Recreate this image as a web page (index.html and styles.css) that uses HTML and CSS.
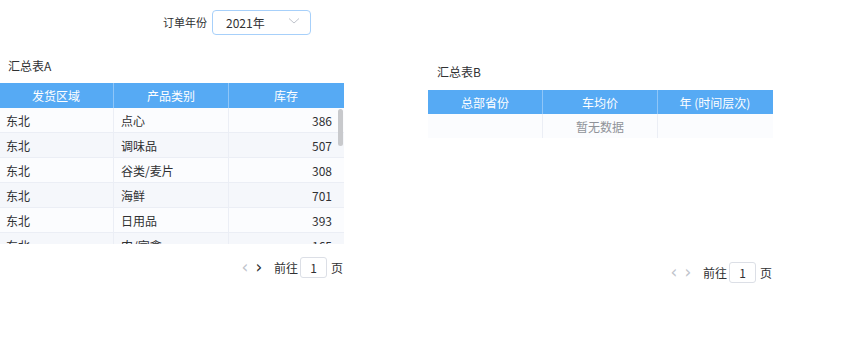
FILE: index.html
```html
<!DOCTYPE html>
<html lang="zh">
<head>
<meta charset="utf-8">
<link rel="stylesheet" href="styles.css">
</head>
<body>
<div class="canvas">
  <div class="widget filter">
    <span class="filter-label">订单年份</span>
    <div class="select">
      <span class="select-value">2021年</span>
      <svg class="chevron" width="12" height="8" viewBox="0 0 12 8"><path d="M1 1.5 L6 6 L11 1.5" fill="none" stroke="#c0c4cc" stroke-width="1"/></svg>
    </div>
  </div>

  <div class="widget title title-a">汇总表A</div>
  <div class="widget table table-a">
    <div class="thead">
      <div class="th">发货区域</div><div class="th">产品类别</div><div class="th">库存</div>
    </div>
    <div class="tbody">
      <div class="tr"><div class="td">东北</div><div class="td">点心</div><div class="td num">386</div></div>
      <div class="tr alt"><div class="td">东北</div><div class="td">调味品</div><div class="td num">507</div></div>
      <div class="tr"><div class="td">东北</div><div class="td">谷类/麦片</div><div class="td num">308</div></div>
      <div class="tr alt"><div class="td">东北</div><div class="td">海鲜</div><div class="td num">701</div></div>
      <div class="tr"><div class="td">东北</div><div class="td">日用品</div><div class="td num">393</div></div>
      <div class="tr alt"><div class="td">东北</div><div class="td">肉/家禽</div><div class="td num">165</div></div>
      <div class="thumb"></div>
    </div>
  </div>
  <div class="widget pager pager-a">
    <span class="arrow off">&lsaquo;</span><span class="arrow on">&rsaquo;</span>
    <span class="goto goto-first">前往</span><span class="page-input">1</span><span class="goto goto-last">页</span>
  </div>

  <div class="widget title title-b">汇总表B</div>
  <div class="widget table table-b">
    <div class="thead thead-b">
      <div class="th">总部省份</div><div class="th">车均价</div><div class="th">年 (时间层次)</div>
    </div>
    <div class="tr empty"><div class="td"></div><div class="td empty-text">暂无数据</div><div class="td"></div></div>
  </div>
  <div class="widget pager pager-b">
    <span class="arrow off">&lsaquo;</span><span class="arrow off">&rsaquo;</span>
    <span class="goto goto-first">前往</span><span class="page-input">1</span><span class="goto goto-last">页</span>
  </div>
</div>
</body>
</html>
```

FILE: styles.css
```css
* { box-sizing: border-box; }
html, body { margin: 0; padding: 0; background: #fff; }
body {
  font-family: "Noto Sans CJK SC", "Noto Sans", sans-serif;
  font-size: 12px;
  color: #303133;
}
.canvas { position: relative; width: 855px; height: 356px; overflow: hidden; }
.widget { position: absolute; }

.filter { left: 163px; top: 10px; display: flex; align-items: center; gap: 5px; height: 24px; }
.filter-label { color: #303133; line-height: 24px; font-size: 11px; }
.select {
  width: 99px; height: 25px;
  border: 1px solid #a7d0fa; border-radius: 4px;
  display: flex; align-items: center; justify-content: space-between;
  padding: 0 10px 0 13px;
}
.select-value { color: #303133; }
.chevron { display: block; margin-top: -2px; }

.title { font-size: 12px; line-height: 16px; color: #303133; }
.title-a { left: 8px; top: 58px; }
.title-b { left: 437px; top: 64px; }

.table { width: 345px; }
.table-a { left: -1px; top: 83px; }
.table-b { left: 428px; top: 90px; }
.thead { display: grid; grid-template-columns: 1fr 1fr 1fr; height: 25px; background: #56aaf4; }
.thead-b { height: 24px; }
.th {
  color: #fff; display: flex; align-items: center; justify-content: center;
  border-right: 1px solid #8fc6f8;
}
.th:last-child { border-right: 1px solid #56aaf4; }
.tbody { position: relative; height: 136px; overflow: hidden; }
.tr { display: grid; grid-template-columns: 1fr 1fr 1fr; height: 25px; background: #fbfcfe; border-bottom: 1px solid #ebeef5; }
.tr.alt { background: #f5f7fb; }
.td { display: flex; align-items: center; padding: 0 7px; border-right: 1px solid #ebeef5; color: #303133; }
.td:last-child { border-right: none; }
.td.num { justify-content: flex-end; padding-right: 12px; }
.tr.empty { height: 24px; border-bottom: none; }
.td.empty-text { justify-content: center; color: #909399; }
.thumb { position: absolute; right: 1px; top: 1px; width: 5px; height: 37px; border-radius: 3px; background: #c8c9cc; }

.pager { display: flex; align-items: center; height: 22px; color: #303133; }
.pager-a { left: 238px; top: 256px; }
.pager-b { left: 667px; top: 261px; }
.arrow { width: 14px; text-align: center; font-size: 17px; line-height: 22px; font-family: "DejaVu Sans", sans-serif; }
.arrow.off { color: #c0c4cc; }
.arrow.on { color: #303133; }
.goto-first { margin: 0 2px 0 8px; }
.goto-last { margin-left: 4px; }
.page-input {
  width: 27px; height: 21px; border: 1px solid #dcdfe6; border-radius: 3px;
  display: flex; align-items: center; justify-content: center; color: #303133;
}
```
